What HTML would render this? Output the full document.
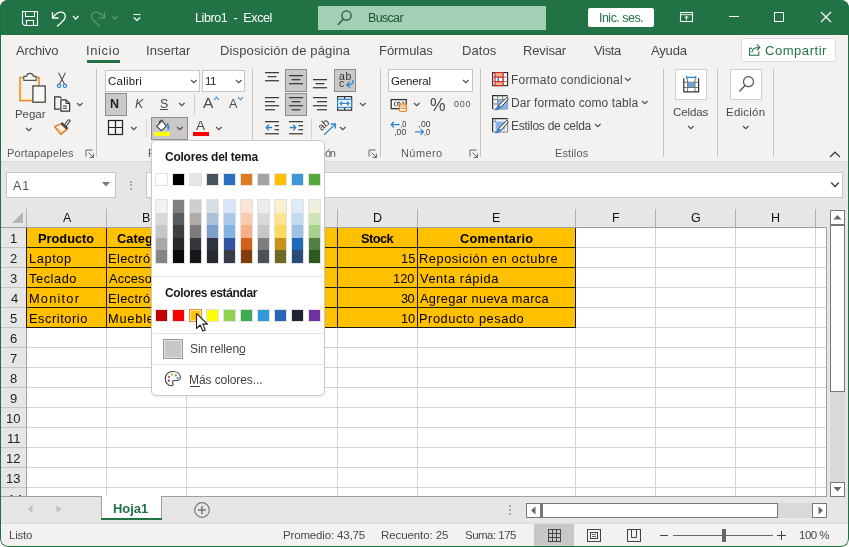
<!DOCTYPE html>
<html><head><meta charset="utf-8"><title>Excel</title>
<style>
html,body{margin:0;padding:0;background:#fff;}
body{width:849px;height:547px;overflow:hidden;position:relative;font-family:"Liberation Sans",sans-serif;}
#win{position:absolute;left:0;top:0;width:849px;height:547px;border-radius:8px;overflow:hidden;background:#e6e6e6;}
.b{position:absolute;box-sizing:border-box;display:block;}
.t{position:absolute;white-space:pre;will-change:transform;}
</style></head><body><div id="win">
<div class="b" style="left:0px;top:0px;width:849px;height:35px;background:#217346;"></div>
<div class="b" style="left:0px;top:35px;width:849px;height:126px;background:#f3f2f1;"></div>
<div class="b" style="left:0px;top:161px;width:849px;height:1px;background:#dcdcdc;"></div>
<div class="b" style="left:0px;top:162px;width:849px;height:362px;background:#e6e6e6;"></div>
<div class="b" style="left:0px;top:524px;width:849px;height:23px;background:#f3f2f1;"></div>
<div class="b" style="left:0px;top:523px;width:849px;height:1px;background:#dddddd;"></div>
<svg class="b" style="left:21px;top:10px;" width="18" height="17" viewBox="0 0 18 17"><path d="M1.5 1.5 H16.5 V15.5 H3.5 L1.5 13.5 Z M4.5 1.5 V6.5 H13.5 V1.5 M5.5 15.5 V10.5 H12.5 V15.5" fill="none" stroke="#fff" stroke-width="1.1"/></svg>
<svg class="b" style="left:50px;top:9px;" width="18" height="19" viewBox="0 0 18 19"><path d="M2.5 3 V9 H8.5 M2.8 8.7 C5 5.5 8 3 11.5 3.2 C14.5 3.5 16 6 15 9 C14 11.5 11 14 7 17.5" fill="none" stroke="#fff" stroke-width="1.3"/></svg>
<svg class="b" style="left:71.75px;top:15.0px;" width="7.5" height="5" viewBox="0 0 7.5 5"><path d="M1 1 L3.75 4 L6.5 1" fill="none" stroke="#fff" stroke-width="1.2"/></svg>
<svg class="b" style="left:89px;top:9px;" width="18" height="19" viewBox="0 0 18 19"><path d="M15.5 3 V9 H9.5 M15.2 8.7 C13 5.5 10 3 6.5 3.2 C3.5 3.5 2 6 3 9 C4 11.5 7 14 11 17.5" fill="none" stroke="#5f9a6f" stroke-width="1.2"/></svg>
<svg class="b" style="left:110.75px;top:15.0px;" width="7.5" height="5" viewBox="0 0 7.5 5"><path d="M1 1 L3.75 4 L6.5 1" fill="none" stroke="#5f9a6f" stroke-width="1.2"/></svg>
<svg class="b" style="left:132px;top:13px;" width="10" height="9" viewBox="0 0 10 9"><path d="M1.5 1.5 H8.5" stroke="#fff" stroke-width="1.2"/><path d="M1.8 4.5 L5 7.5 L8.2 4.5" fill="none" stroke="#fff" stroke-width="1.2"/></svg>
<div class="t" style="left:194.50px;top:11px;font-size:12.5px;line-height:14px;color:#fff;letter-spacing:-0.404px;">Libro1  -  Excel</div>
<div class="b" style="left:318px;top:6px;width:228px;height:24px;background:#a5cfb4;"></div>
<svg class="b" style="left:336px;top:9px;" width="18" height="18" viewBox="0 0 18 18"><circle cx="10.5" cy="6.5" r="4.6" fill="none" stroke="#1e5c39" stroke-width="1.3"/><path d="M7.3 10 L2 15.8" stroke="#1e5c39" stroke-width="1.3"/></svg>
<div class="t" style="left:367.60px;top:11px;font-size:12.5px;line-height:14px;color:#145a32;letter-spacing:-0.670px;">Buscar</div>
<div class="b" style="left:588px;top:8px;width:66px;height:19px;background:#fff;border-radius:2px;"></div>
<div class="t" style="left:598.67px;top:11px;font-size:12.5px;line-height:14px;color:#217346;letter-spacing:-0.525px;">Inic. ses.</div>
<svg class="b" style="left:679px;top:11px;" width="15" height="12" viewBox="0 0 15 12"><rect x="1.5" y="1.5" width="12" height="9" fill="none" stroke="#fff" stroke-width="1.1"/><path d="M1.5 3.7 H13.5" stroke="#fff" stroke-width="0.9"/><path d="M7.5 9.3 V5.4 M5.6 7 L7.5 5.1 L9.4 7" fill="none" stroke="#fff" stroke-width="1"/></svg>
<div class="b" style="left:729px;top:16px;width:10px;height:1px;background:#fff;"></div>
<div class="b" style="left:774px;top:12px;width:10px;height:10px;border:1px solid #fff;"></div>
<svg class="b" style="left:820px;top:11px;" width="12" height="12" viewBox="0 0 12 12"><path d="M1 1 L11 11 M11 1 L1 11" stroke="#fff" stroke-width="1.2"/></svg>
<div class="t" style="left:15.50px;top:43px;font-size:13px;line-height:15px;color:#484848;letter-spacing:-0.156px;">Archivo</div>
<div class="t" style="left:85.83px;top:43px;font-size:13px;line-height:15px;color:#484848;letter-spacing:0.607px;">Inicio</div>
<div class="t" style="left:145.83px;top:43px;font-size:13px;line-height:15px;color:#484848;letter-spacing:0.042px;">Insertar</div>
<div class="t" style="left:220.26px;top:43px;font-size:13px;line-height:15px;color:#484848;letter-spacing:0.143px;">Disposición de página</div>
<div class="t" style="left:378.96px;top:43px;font-size:13px;line-height:15px;color:#484848;letter-spacing:-0.045px;">Fórmulas</div>
<div class="t" style="left:461.56px;top:43px;font-size:13px;line-height:15px;color:#484848;letter-spacing:0.091px;">Datos</div>
<div class="t" style="left:523.26px;top:43px;font-size:13px;line-height:15px;color:#484848;letter-spacing:-0.156px;">Revisar</div>
<div class="t" style="left:594.20px;top:43px;font-size:13px;line-height:15px;color:#484848;letter-spacing:-0.333px;">Vista</div>
<div class="t" style="left:651.00px;top:43px;font-size:13px;line-height:15px;color:#484848;letter-spacing:-0.165px;">Ayuda</div>
<div class="b" style="left:87px;top:60px;width:33px;height:3px;background:#217346;"></div>
<div class="b" style="left:741px;top:38px;width:95px;height:24px;background:#fff;border:1px solid #dedcda;border-radius:3px;"></div>
<svg class="b" style="left:748px;top:42px;" width="14" height="15" viewBox="0 0 14 15"><path d="M4.2 6.2 H1.6 V13.2 H10.8 V9.6" fill="none" stroke="#217346" stroke-width="1.1"/><path d="M3.8 10.4 C4.2 7.2 7 5.4 11.4 5.5 M8.8 2.6 L11.8 5.5 L8.8 8.4" fill="none" stroke="#217346" stroke-width="1.1"/></svg>
<div class="t" style="left:765.15px;top:43px;font-size:13px;line-height:15px;color:#217346;letter-spacing:0.547px;">Compartir</div>
<div class="b" style="left:96px;top:69px;width:1px;height:88px;background:#c8c6c4;"></div>
<div class="b" style="left:252px;top:69px;width:1px;height:88px;background:#c8c6c4;"></div>
<div class="b" style="left:380px;top:69px;width:1px;height:88px;background:#c8c6c4;"></div>
<div class="b" style="left:480px;top:69px;width:1px;height:88px;background:#c8c6c4;"></div>
<div class="b" style="left:663px;top:69px;width:1px;height:88px;background:#c8c6c4;"></div>
<div class="b" style="left:717px;top:69px;width:1px;height:88px;background:#c8c6c4;"></div>
<div class="b" style="left:773px;top:69px;width:1px;height:88px;background:#c8c6c4;"></div>
<svg class="b" style="left:17px;top:71px;" width="32" height="34" viewBox="0 0 32 34"><rect x="3" y="6.6" width="19" height="23" fill="#f3f2f1" stroke="#e4882c" stroke-width="1.6"/>
<rect x="4.4" y="8" width="16.2" height="20.2" fill="none" stroke="#ffe69a" stroke-width="1.2"/>
<path d="M6.8 9.4 V5.4 H9.6 C10 1.4 16 1.4 16.4 5.4 H19.2 V9.4 Z" fill="#f8f8f8" stroke="#555" stroke-width="1.1"/>
<rect x="15.9" y="15" width="12.3" height="16.2" fill="#f8f8f8" stroke="#444" stroke-width="1.3"/></svg>
<div class="t" style="left:14.78px;top:108px;font-size:11.5px;line-height:12px;color:#4a4a4a;letter-spacing:-0.053px;">Pegar</div>
<svg class="b" style="left:25.2px;top:127.15px;" width="7.6" height="4.7" viewBox="0 0 7.6 4.7"><path d="M1 1 L3.8 3.7 L6.6 1" fill="none" stroke="#4a4a4a" stroke-width="1.1"/></svg>
<svg class="b" style="left:56px;top:71px;" width="12" height="18" viewBox="0 0 12 18"><path d="M2.6 1.8 L8.4 13 M9.4 1.8 L3.6 13" stroke="#555" stroke-width="1.1" fill="none"/>
<circle cx="3" cy="14.8" r="1.7" fill="none" stroke="#2f86d0" stroke-width="1.2"/><circle cx="9" cy="14.8" r="1.7" fill="none" stroke="#2f86d0" stroke-width="1.2"/></svg>
<svg class="b" style="left:53px;top:95px;" width="19" height="18" viewBox="0 0 19 18"><path d="M6.8 14.2 H1.7 V1.8 H7 L8.6 3.4" fill="none" stroke="#333" stroke-width="1.25"/>
<path d="M7.9 4.9 H13 L16.6 8.5 V16.2 H7.9 Z" fill="#f8f8f8" stroke="#333" stroke-width="1.25" stroke-linejoin="round"/><path d="M13 4.9 V8.5 H16.6" fill="none" stroke="#333" stroke-width="1"/><path d="M10 11 H14 M10 13.3 H14" stroke="#333" stroke-width="1"/></svg>
<svg class="b" style="left:75.7px;top:102.15px;" width="7.6" height="4.7" viewBox="0 0 7.6 4.7"><path d="M1 1 L3.8 3.7 L6.6 1" fill="none" stroke="#4a4a4a" stroke-width="1.1"/></svg>
<svg class="b" style="left:53px;top:119px;" width="19" height="17" viewBox="0 0 19 17"><path d="M15.8 1.9 L12.3 6.6" stroke="#444" stroke-width="3.3" stroke-linecap="round" fill="none"/><path d="M15.8 1.9 L12.6 6.2" stroke="#f3f2f1" stroke-width="1.2" stroke-linecap="round" fill="none"/>
<path d="M1.7 7.7 L8 4.8 L13.8 10.4 L7.8 15.4 Z" fill="#fff6ec" stroke="#e07a1f" stroke-width="1.4" stroke-linejoin="round"/>
<path d="M4.5 9.5 L9.5 12.8" stroke="#f0a860" stroke-width="1"/>
<path d="M8.4 3.9 L14.6 9.9" stroke="#444" stroke-width="2.2" fill="none"/></svg>
<div class="t" style="left:6.82px;top:147px;font-size:11px;line-height:12px;color:#5a5a5a;letter-spacing:0.156px;">Portapapeles</div>
<svg class="b" style="left:85px;top:149px;" width="10" height="10" viewBox="0 0 10 10"><path d="M1 7.6 V1 H7.6" fill="none" stroke="#666" stroke-width="1"/><path d="M3.6 3.6 L8.4 8.4 M8.4 4.6 V8.4 H4.6" fill="none" stroke="#666" stroke-width="1"/></svg>
<div class="b" style="left:105px;top:70px;width:95px;height:22px;background:#fff;border:1px solid #c8c6c4;"></div>
<div class="t" style="left:108.22px;top:75px;font-size:11.5px;line-height:12px;color:#222;letter-spacing:0.213px;">Calibri</div>
<svg class="b" style="left:189.7px;top:79.15px;" width="7.6" height="4.7" viewBox="0 0 7.6 4.7"><path d="M1 1 L3.8 3.7 L6.6 1" fill="none" stroke="#4a4a4a" stroke-width="1.1"/></svg>
<div class="b" style="left:202px;top:70px;width:43px;height:22px;background:#fff;border:1px solid #c8c6c4;"></div>
<div class="t" style="left:204.84px;top:75px;font-size:11.5px;line-height:12px;color:#222;letter-spacing:-0.522px;">11</div>
<svg class="b" style="left:235.2px;top:79.15px;" width="7.6" height="4.7" viewBox="0 0 7.6 4.7"><path d="M1 1 L3.8 3.7 L6.6 1" fill="none" stroke="#4a4a4a" stroke-width="1.1"/></svg>
<div class="b" style="left:105px;top:93px;width:22px;height:23px;background:#cbc9c7;border:1px solid #8f8d8b;"></div>
<div class="t" style="left:109.79px;top:97px;font-size:12.5px;line-height:14px;color:#222;font-weight:700;">N</div>
<div class="t" style="left:134.93px;top:97px;font-size:12.5px;line-height:14px;color:#4a4a4a;font-style:italic;">K</div>
<div class="t" style="left:160.44px;top:97px;font-size:12.5px;line-height:14px;color:#4a4a4a;">S</div>
<div class="b" style="left:160px;top:109px;width:8px;height:1px;background:#4a4a4a;"></div>
<svg class="b" style="left:177.7px;top:102.15px;" width="7.6" height="4.7" viewBox="0 0 7.6 4.7"><path d="M1 1 L3.8 3.7 L6.6 1" fill="none" stroke="#4a4a4a" stroke-width="1.1"/></svg>
<div class="b" style="left:194px;top:94px;width:1px;height:21px;background:#d2d0ce;"></div>
<div class="t" style="left:203.00px;top:94px;font-size:15.5px;line-height:17px;color:#4a4a4a;">A</div>
<svg class="b" style="left:212.5px;top:96px;" width="7" height="5" viewBox="0 0 7 5"><path d="M1 4 L3.5 1.2 L6 4" fill="none" stroke="#2f86d0" stroke-width="1.05"/></svg>
<div class="t" style="left:228.60px;top:97px;font-size:12.5px;line-height:14px;color:#4a4a4a;">A</div>
<svg class="b" style="left:236.5px;top:96px;" width="7" height="5" viewBox="0 0 7 5"><path d="M1 1 L3.5 3.8 L6 1" fill="none" stroke="#2f86d0" stroke-width="1.05"/></svg>
<svg class="b" style="left:107px;top:119px;" width="17" height="17" viewBox="0 0 17 17"><rect x="1.5" y="1.5" width="14" height="14" fill="none" stroke="#222" stroke-width="1.2"/><path d="M8.5 1.5 V15.5 M1.5 8.5 H15.5" stroke="#222" stroke-width="1.2"/></svg>
<svg class="b" style="left:129.7px;top:126.15px;" width="7.6" height="4.7" viewBox="0 0 7.6 4.7"><path d="M1 1 L3.8 3.7 L6.6 1" fill="none" stroke="#4a4a4a" stroke-width="1.1"/></svg>
<div class="b" style="left:146px;top:119px;width:1px;height:18px;background:#d8d6d4;"></div>
<div class="b" style="left:151px;top:117px;width:37px;height:23px;background:#cbc9c7;border:1px solid #8f8d8b;"></div>
<svg class="b" style="left:156px;top:119px;" width="15" height="13" viewBox="0 0 15 13"><path d="M0.7 7.4 L6.2 1.6 L10.3 7.2 L5.4 11.6 Z" fill="#fff" stroke="#3b3b3b" stroke-width="1.1" stroke-linejoin="round"/>
<path d="M6.4 1.2 C4.2 0.6 2.6 2.6 3.6 4.6" fill="none" stroke="#3b3b3b" stroke-width="1"/>
<path d="M10.9 4.4 C12.4 6 12.7 8.4 12.3 10.6" fill="none" stroke="#2f86d0" stroke-width="1.7"/></svg>
<div class="b" style="left:154px;top:132px;width:16px;height:4px;background:#ffff00;"></div>
<svg class="b" style="left:175.7px;top:126.15px;" width="7.6" height="4.7" viewBox="0 0 7.6 4.7"><path d="M1 1 L3.8 3.7 L6.6 1" fill="none" stroke="#4a4a4a" stroke-width="1.1"/></svg>
<div class="t" style="left:196.30px;top:118px;font-size:13.5px;line-height:15px;color:#4a4a4a;">A</div>
<div class="b" style="left:193px;top:132px;width:16px;height:4px;background:#ff0000;"></div>
<svg class="b" style="left:214.7px;top:126.15px;" width="7.6" height="4.7" viewBox="0 0 7.6 4.7"><path d="M1 1 L3.8 3.7 L6.6 1" fill="none" stroke="#4a4a4a" stroke-width="1.1"/></svg>
<svg class="b" style="left:265px;top:71.5px;" width="15" height="13.149999999999999" viewBox="0 0 15 13.149999999999999"><rect x="0" y="0.00" width="14" height="1.25" fill="#3b3b3b"/><rect x="2.6" y="4.05" width="8.8" height="1.25" fill="#3b3b3b"/><rect x="0" y="8.10" width="14" height="1.25" fill="#3b3b3b"/></svg>
<div class="b" style="left:285px;top:69px;width:22px;height:23px;background:#cbc9c7;border:1px solid #8f8d8b;"></div>
<svg class="b" style="left:289px;top:75px;" width="15" height="13.149999999999999" viewBox="0 0 15 13.149999999999999"><rect x="0" y="0.00" width="14" height="1.25" fill="#3b3b3b"/><rect x="2.6" y="4.05" width="8.8" height="1.25" fill="#3b3b3b"/><rect x="0" y="8.10" width="14" height="1.25" fill="#3b3b3b"/></svg>
<svg class="b" style="left:313px;top:79.2px;" width="15" height="13.149999999999999" viewBox="0 0 15 13.149999999999999"><rect x="0" y="0.00" width="14" height="1.25" fill="#3b3b3b"/><rect x="2.6" y="4.05" width="8.8" height="1.25" fill="#3b3b3b"/><rect x="0" y="8.10" width="14" height="1.25" fill="#3b3b3b"/></svg>
<div class="b" style="left:334px;top:69px;width:22px;height:23px;background:#cbc9c7;border:1px solid #8f8d8b;"></div>
<div class="t" style="left:338.98px;top:70px;font-size:10.5px;line-height:12px;color:#333;letter-spacing:0.785px;">ab</div>
<div class="t" style="left:339.18px;top:77px;font-size:10.5px;line-height:12px;color:#333;">c</div>
<svg class="b" style="left:345px;top:79px;" width="10" height="10" viewBox="0 0 10 10"><path d="M8 1 C8.6 4.5 7 6 2 5.8 M4.8 3 L1.6 5.8 L4.8 8.6" fill="none" stroke="#2f86d0" stroke-width="1.3"/></svg>
<svg class="b" style="left:265px;top:97.2px;" width="15" height="17.2" viewBox="0 0 15 17.2"><rect x="0" y="0.00" width="14" height="1.25" fill="#3b3b3b"/><rect x="0" y="4.05" width="10" height="1.25" fill="#3b3b3b"/><rect x="0" y="8.10" width="14" height="1.25" fill="#3b3b3b"/><rect x="0" y="12.15" width="10" height="1.25" fill="#3b3b3b"/></svg>
<div class="b" style="left:285px;top:93px;width:22px;height:23px;background:#cbc9c7;border:1px solid #8f8d8b;"></div>
<svg class="b" style="left:289px;top:97.2px;" width="15" height="17.2" viewBox="0 0 15 17.2"><rect x="0" y="0.00" width="14" height="1.25" fill="#3b3b3b"/><rect x="2.6" y="4.05" width="8.8" height="1.25" fill="#3b3b3b"/><rect x="0" y="8.10" width="14" height="1.25" fill="#3b3b3b"/><rect x="2.6" y="12.15" width="8.8" height="1.25" fill="#3b3b3b"/></svg>
<svg class="b" style="left:313px;top:97.2px;" width="15" height="17.2" viewBox="0 0 15 17.2"><rect x="0" y="0.00" width="14" height="1.25" fill="#3b3b3b"/><rect x="4" y="4.05" width="10" height="1.25" fill="#3b3b3b"/><rect x="0" y="8.10" width="14" height="1.25" fill="#3b3b3b"/><rect x="4" y="12.15" width="10" height="1.25" fill="#3b3b3b"/></svg>
<svg class="b" style="left:337px;top:96px;" width="16" height="15" viewBox="0 0 16 15"><rect x="0.6" y="0.6" width="14" height="13.6" fill="#fff" stroke="#333" stroke-width="1.2"/>
<path d="M7.6 0.6 V14.2" stroke="#333" stroke-width="1.2"/>
<rect x="0.7" y="3.3" width="13.8" height="8.2" fill="#fff" stroke="#2f86d0" stroke-width="1.3"/>
<path d="M3 7.4 H12.2 M5.2 5.2 L3 7.4 L5.2 9.6 M10 5.2 L12.2 7.4 L10 9.6" fill="none" stroke="#2f86d0" stroke-width="1.1"/></svg>
<svg class="b" style="left:358.9px;top:102.15px;" width="7.6" height="4.7" viewBox="0 0 7.6 4.7"><path d="M1 1 L3.8 3.7 L6.6 1" fill="none" stroke="#4a4a4a" stroke-width="1.1"/></svg>
<svg class="b" style="left:265px;top:121px;" width="15" height="17.2" viewBox="0 0 15 17.2"><rect x="0" y="0.00" width="14" height="1.25" fill="#3b3b3b"/><rect x="9.6" y="4.05" width="4.4" height="1.25" fill="#3b3b3b"/><rect x="9.6" y="8.10" width="4.4" height="1.25" fill="#3b3b3b"/><rect x="0" y="12.15" width="14" height="1.25" fill="#3b3b3b"/></svg>
<svg class="b" style="left:264.5px;top:123px;" width="9" height="9" viewBox="0 0 9 9"><path d="M7.2 4.5 H1.2 M3.8 1.8 L1.2 4.5 L3.8 7.2" fill="none" stroke="#2f86d0" stroke-width="1.3"/></svg>
<svg class="b" style="left:289px;top:121px;" width="15" height="17.2" viewBox="0 0 15 17.2"><rect x="0" y="0.00" width="14" height="1.25" fill="#3b3b3b"/><rect x="9.4" y="4.05" width="4.6" height="1.25" fill="#3b3b3b"/><rect x="9.4" y="8.10" width="4.6" height="1.25" fill="#3b3b3b"/><rect x="0" y="12.15" width="14" height="1.25" fill="#3b3b3b"/></svg>
<svg class="b" style="left:288.5px;top:123px;" width="9" height="9" viewBox="0 0 9 9"><path d="M0.8 4.5 H6.8 M4.2 1.8 L6.8 4.5 L4.2 7.2" fill="none" stroke="#2f86d0" stroke-width="1.3"/></svg>
<div class="b" style="left:311px;top:118px;width:1px;height:21px;background:#d2d0ce;"></div>
<svg class="b" style="left:317px;top:117px;" width="20" height="20" viewBox="0 0 20 20"><text x="0" y="0" font-family="Liberation Sans" font-size="10.5" fill="#3b3b3b" transform="translate(4.4 14.2) rotate(-42)">ab</text>
<path d="M7.2 17.7 L18 7.4 M13.6 7 H18.3 V11.6" fill="none" stroke="#2f86d0" stroke-width="1.3"/></svg>
<svg class="b" style="left:338.7px;top:125.95000000000002px;" width="7.6" height="4.7" viewBox="0 0 7.6 4.7"><path d="M1 1 L3.8 3.7 L6.6 1" fill="none" stroke="#4a4a4a" stroke-width="1.1"/></svg>
<div class="t" style="left:324.56px;top:147px;font-size:11px;line-height:12px;color:#5a5a5a;letter-spacing:-1.410px;">ón</div>
<svg class="b" style="left:368px;top:149px;" width="10" height="10" viewBox="0 0 10 10"><path d="M1 7.6 V1 H7.6" fill="none" stroke="#666" stroke-width="1"/><path d="M3.6 3.6 L8.4 8.4 M8.4 4.6 V8.4 H4.6" fill="none" stroke="#666" stroke-width="1"/></svg>
<div class="b" style="left:388px;top:69px;width:85px;height:23px;background:#fff;border:1px solid #c8c6c4;"></div>
<div class="t" style="left:391.12px;top:75px;font-size:11.5px;line-height:12px;color:#222;letter-spacing:-0.136px;">General</div>
<svg class="b" style="left:462.2px;top:79.15px;" width="7.6" height="4.7" viewBox="0 0 7.6 4.7"><path d="M1 1 L3.8 3.7 L6.6 1" fill="none" stroke="#4a4a4a" stroke-width="1.1"/></svg>
<svg class="b" style="left:390px;top:98px;" width="18" height="15" viewBox="0 0 18 15"><rect x="1.2" y="1.6" width="15" height="9" fill="#fff" stroke="#333" stroke-width="1.3"/>
<path d="M6.2 4 C3.6 3.6 3.6 8.4 6.2 8 M7.8 4 V8.2 M7.8 5.2 C8.4 3.6 10 3.8 10 5.2 V8.2 M12 4 C13 3.6 14 4.4 13.6 6" fill="none" stroke="#333" stroke-width="1"/>
<path d="M9.4 7 C9.4 5.4 16.4 5.4 16.4 7 V12.2 C16.4 13.8 9.4 13.8 9.4 12.2 Z" fill="#fff" stroke="#e8862d" stroke-width="1.2"/>
<path d="M9.4 7 C9.4 8.4 16.4 8.4 16.4 7 M9.4 9.3 C9.4 10.7 16.4 10.7 16.4 9.3" fill="none" stroke="#e8862d" stroke-width="1.1"/></svg>
<svg class="b" style="left:413.2px;top:102.15px;" width="7.6" height="4.7" viewBox="0 0 7.6 4.7"><path d="M1 1 L3.8 3.7 L6.6 1" fill="none" stroke="#4a4a4a" stroke-width="1.1"/></svg>
<div class="t" style="left:429.99px;top:95px;font-size:17.5px;line-height:20px;color:#4a4a4a;">%</div>
<div class="t" style="left:453.69px;top:99px;font-size:9px;line-height:10px;color:#555;letter-spacing:0.723px;">000</div>
<svg class="b" style="left:390px;top:119px;" width="18" height="17" viewBox="0 0 18 17"><path d="M1.2 5.7 H9.6 M4 2.8 L1.2 5.7 L4 8.6" fill="none" stroke="#2f86d0" stroke-width="1.3"/>
<text x="10.2" y="7.8" font-family="Liberation Sans" font-size="8.6" fill="#3b3b3b" lengthAdjust="spacingAndGlyphs" textLength="6.3">,0</text><text x="4.2" y="16.2" font-family="Liberation Sans" font-size="8.6" fill="#3b3b3b" lengthAdjust="spacingAndGlyphs" textLength="12">,00</text></svg>
<svg class="b" style="left:414px;top:119px;" width="18" height="17" viewBox="0 0 18 17"><text x="4.6" y="7.8" font-family="Liberation Sans" font-size="8.6" fill="#3b3b3b" lengthAdjust="spacingAndGlyphs" textLength="12">,00</text>
<path d="M1 12.8 H9.4 M6.6 9.9 L9.4 12.8 L6.6 15.7" fill="none" stroke="#2f86d0" stroke-width="1.3"/><text x="10" y="16.2" font-family="Liberation Sans" font-size="8.6" fill="#3b3b3b" lengthAdjust="spacingAndGlyphs" textLength="6.3">,0</text></svg>
<div class="t" style="left:400.62px;top:147px;font-size:11px;line-height:12px;color:#5a5a5a;letter-spacing:0.423px;">Número</div>
<svg class="b" style="left:468.5px;top:149px;" width="10" height="10" viewBox="0 0 10 10"><path d="M1 7.6 V1 H7.6" fill="none" stroke="#666" stroke-width="1"/><path d="M3.6 3.6 L8.4 8.4 M8.4 4.6 V8.4 H4.6" fill="none" stroke="#666" stroke-width="1"/></svg>
<svg class="b" style="left:491px;top:71px;" width="18" height="16" viewBox="0 0 18 16"><rect x="1.6" y="1.6" width="15" height="13" fill="#fff" stroke="#333" stroke-width="1.2"/>
<path d="M1.6 6 H16.6 M1.6 10.6 H16.6 M12 1.6 V14.6" stroke="#777" stroke-width="0.9"/>
<rect x="4" y="1.6" width="8" height="4.4" fill="#f6b48a" stroke="#d9281e" stroke-width="1.2"/>
<path d="M4 6 V10.6 M12 6 V10.6" stroke="#d9281e" stroke-width="1.2"/>
<rect x="6.4" y="6.6" width="1.6" height="3.6" fill="#3a7bd5"/>
<rect x="4" y="10.6" width="8" height="4" fill="#f6b48a" stroke="#d9281e" stroke-width="1.2"/></svg>
<svg class="b" style="left:491px;top:94px;" width="19" height="17" viewBox="0 0 19 17"><path d="M1.6 15 V1.6 H16.6" fill="none" stroke="#333" stroke-width="1.2"/>
<path d="M1.6 5.6 H16.6 M1.6 10 H16.6 M6.6 1.6 V15 M11.6 1.6 V15 M16.6 1.6 V15 M1.6 15 H16.6" stroke="#777" stroke-width="0.9" fill="none"/>
<rect x="6.8" y="5.8" width="9.8" height="9" fill="#8ab4e8"/><path d="M15.8 3.4 L17.4 5 L10 13.4 L7.6 11.6 Z" fill="#fff" stroke="#333" stroke-width="1"/><path d="M7.6 11.6 L10 13.4 C8.6 15.6 6 15.8 4 15.9 C5.6 14.6 5.8 12.6 7.6 11.6 Z" fill="#3a86d8" stroke="#2f78c8" stroke-width="0.6"/></svg>
<svg class="b" style="left:491px;top:117px;" width="19" height="17" viewBox="0 0 19 17"><path d="M1.6 15 V1.6 H16.6" fill="none" stroke="#333" stroke-width="1.2"/>
<path d="M16.6 1.6 V15 H1.6 M1.6 4.5 H4.5 M4.5 1.6 V4.5" stroke="#777" stroke-width="0.9" fill="none"/>
<rect x="4.5" y="4.5" width="9.5" height="8" fill="#8ab4e8"/><path d="M15.8 3.4 L17.4 5 L10 13.4 L7.6 11.6 Z" fill="#fff" stroke="#333" stroke-width="1"/><path d="M7.6 11.6 L10 13.4 C8.6 15.6 6 15.8 4 15.9 C5.6 14.6 5.8 12.6 7.6 11.6 Z" fill="#3a86d8" stroke="#2f78c8" stroke-width="0.6"/></svg>
<div class="t" style="left:510.64px;top:73px;font-size:12px;line-height:14px;color:#4a4a4a;letter-spacing:0.196px;">Formato condicional</div>
<svg class="b" style="left:623.7px;top:77.15px;" width="7.6" height="4.7" viewBox="0 0 7.6 4.7"><path d="M1 1 L3.8 3.7 L6.6 1" fill="none" stroke="#4a4a4a" stroke-width="1.1"/></svg>
<div class="t" style="left:510.64px;top:96px;font-size:12px;line-height:14px;color:#4a4a4a;letter-spacing:0.081px;">Dar formato como tabla</div>
<svg class="b" style="left:640.7px;top:100.15px;" width="7.6" height="4.7" viewBox="0 0 7.6 4.7"><path d="M1 1 L3.8 3.7 L6.6 1" fill="none" stroke="#4a4a4a" stroke-width="1.1"/></svg>
<div class="t" style="left:510.64px;top:119px;font-size:12px;line-height:14px;color:#4a4a4a;letter-spacing:-0.251px;">Estilos de celda</div>
<svg class="b" style="left:593.7px;top:123.15px;" width="7.6" height="4.7" viewBox="0 0 7.6 4.7"><path d="M1 1 L3.8 3.7 L6.6 1" fill="none" stroke="#4a4a4a" stroke-width="1.1"/></svg>
<div class="t" style="left:554.52px;top:147px;font-size:11px;line-height:12px;color:#5a5a5a;letter-spacing:0.128px;">Estilos</div>
<div class="b" style="left:675px;top:69px;width:32px;height:31px;background:#fff;border:1px solid #d2d0ce;"></div>
<svg class="b" style="left:682px;top:75px;" width="19" height="19" viewBox="0 0 19 19"><path d="M4.6 0.8 V4 M13.8 0.8 V4 M4.6 2.4 H13.8" stroke="#2f86d0" stroke-width="1.1" fill="none"/>
<rect x="5.8" y="7.6" width="7.2" height="4.8" fill="#6fa3e0"/>
<path d="M1.8 7.2 H16.6 M1.8 12.5 H16.6 M5.6 3.6 V16.8 M13 3.6 V16.8" stroke="#666" stroke-width="0.9" fill="none"/>
<path d="M1.8 3.2 V16.8 H16.6 V3.2" stroke="#333" stroke-width="1.2" fill="none"/></svg>
<div class="t" style="left:672.72px;top:106px;font-size:11.5px;line-height:12px;color:#4a4a4a;letter-spacing:-0.109px;">Celdas</div>
<svg class="b" style="left:686.7px;top:125.15px;" width="7.6" height="4.7" viewBox="0 0 7.6 4.7"><path d="M1 1 L3.8 3.7 L6.6 1" fill="none" stroke="#4a4a4a" stroke-width="1.1"/></svg>
<div class="b" style="left:730px;top:69px;width:32px;height:31px;background:#fff;border:1px solid #d2d0ce;"></div>
<svg class="b" style="left:738px;top:75px;" width="18" height="18" viewBox="0 0 18 18"><circle cx="10.5" cy="6.7" r="5" fill="none" stroke="#555" stroke-width="1.2"/><path d="M7 10.5 L1.5 16.5" stroke="#555" stroke-width="1.3"/></svg>
<div class="t" style="left:725.78px;top:106px;font-size:11.5px;line-height:12px;color:#4a4a4a;letter-spacing:0.232px;">Edición</div>
<svg class="b" style="left:741.7px;top:125.15px;" width="7.6" height="4.7" viewBox="0 0 7.6 4.7"><path d="M1 1 L3.8 3.7 L6.6 1" fill="none" stroke="#4a4a4a" stroke-width="1.1"/></svg>
<svg class="b" style="left:829px;top:151px;" width="12" height="7" viewBox="0 0 12 7"><path d="M1 6 L6 1.2 L11 6" fill="none" stroke="#444" stroke-width="1.3"/></svg>
<div class="b" style="left:6px;top:172px;width:110px;height:26px;background:#fff;border:1px solid #c6c6c6;"></div>
<div class="t" style="left:12.70px;top:179px;font-size:12.5px;line-height:14px;color:#555;letter-spacing:0.913px;">A1</div>
<svg class="b" style="left:101px;top:181px;" width="10" height="7" viewBox="0 0 10 7"><path d="M1 1 H9 L5 5.5 Z" fill="#777"/></svg>
<div class="b" style="left:130px;top:180.5px;width:2px;height:2px;background:#aaa;"></div>
<div class="b" style="left:130px;top:184px;width:2px;height:2px;background:#aaa;"></div>
<div class="b" style="left:130px;top:187.5px;width:2px;height:2px;background:#aaa;"></div>
<div class="b" style="left:146px;top:172px;width:697px;height:26px;background:#fff;border:1px solid #c6c6c6;"></div>
<svg class="b" style="left:830px;top:181px;" width="10" height="8" viewBox="0 0 10 8"><path d="M1.2 1.5 L5 5.5 L8.8 1.5" fill="none" stroke="#555" stroke-width="1.8"/></svg>
<div class="b" style="left:27px;top:228px;width:799px;height:268px;background:#fff;"></div>
<div class="b" style="left:1px;top:207px;width:826px;height:21px;background:#e6e6e6;"></div>
<div class="b" style="left:1px;top:228px;width:26px;height:268px;background:#e6e6e6;"></div>
<svg class="b" style="left:11px;top:211px;" width="13" height="13" viewBox="0 0 13 13"><path d="M12 1 V12 H1 Z" fill="#b5b5b5"/></svg>
<div class="b" style="left:26px;top:209px;width:1px;height:19px;background:#b0b0b0;"></div>
<div class="b" style="left:106px;top:209px;width:1px;height:19px;background:#b0b0b0;"></div>
<div class="b" style="left:186px;top:209px;width:1px;height:19px;background:#b0b0b0;"></div>
<div class="b" style="left:337px;top:209px;width:1px;height:19px;background:#b0b0b0;"></div>
<div class="b" style="left:417px;top:209px;width:1px;height:19px;background:#b0b0b0;"></div>
<div class="b" style="left:575px;top:209px;width:1px;height:19px;background:#b0b0b0;"></div>
<div class="b" style="left:655px;top:209px;width:1px;height:19px;background:#b0b0b0;"></div>
<div class="b" style="left:735px;top:209px;width:1px;height:19px;background:#b0b0b0;"></div>
<div class="b" style="left:815px;top:209px;width:1px;height:19px;background:#b0b0b0;"></div>
<div class="b" style="left:1px;top:227px;width:826px;height:1px;background:#9f9f9f;"></div>
<div class="b" style="left:26px;top:228px;width:1px;height:268px;background:#9f9f9f;"></div>
<div class="t" style="left:63.23px;top:211px;font-size:12.5px;line-height:14px;color:#111;">A</div>
<div class="t" style="left:142.23px;top:211px;font-size:12.5px;line-height:14px;color:#111;">B</div>
<div class="t" style="left:257.76px;top:211px;font-size:12.5px;line-height:14px;color:#111;">C</div>
<div class="t" style="left:372.89px;top:211px;font-size:12.5px;line-height:14px;color:#111;">D</div>
<div class="t" style="left:492.23px;top:211px;font-size:12.5px;line-height:14px;color:#111;">E</div>
<div class="t" style="left:611.58px;top:211px;font-size:12.5px;line-height:14px;color:#111;">F</div>
<div class="t" style="left:690.91px;top:211px;font-size:12.5px;line-height:14px;color:#111;">G</div>
<div class="t" style="left:770.89px;top:211px;font-size:12.5px;line-height:14px;color:#111;">H</div>
<div class="b" style="left:106px;top:228px;width:1px;height:268px;background:#d4d4d4;"></div>
<div class="b" style="left:186px;top:228px;width:1px;height:268px;background:#d4d4d4;"></div>
<div class="b" style="left:337px;top:228px;width:1px;height:268px;background:#d4d4d4;"></div>
<div class="b" style="left:417px;top:228px;width:1px;height:268px;background:#d4d4d4;"></div>
<div class="b" style="left:575px;top:228px;width:1px;height:268px;background:#d4d4d4;"></div>
<div class="b" style="left:655px;top:228px;width:1px;height:268px;background:#d4d4d4;"></div>
<div class="b" style="left:735px;top:228px;width:1px;height:268px;background:#d4d4d4;"></div>
<div class="b" style="left:815px;top:228px;width:1px;height:268px;background:#d4d4d4;"></div>
<div class="b" style="left:1px;top:247px;width:25px;height:1px;background:#c4c4c4;"></div>
<div class="b" style="left:27px;top:247px;width:799px;height:1px;background:#d4d4d4;"></div>
<div class="b" style="left:1px;top:267px;width:25px;height:1px;background:#c4c4c4;"></div>
<div class="b" style="left:27px;top:267px;width:799px;height:1px;background:#d4d4d4;"></div>
<div class="b" style="left:1px;top:287px;width:25px;height:1px;background:#c4c4c4;"></div>
<div class="b" style="left:27px;top:287px;width:799px;height:1px;background:#d4d4d4;"></div>
<div class="b" style="left:1px;top:307px;width:25px;height:1px;background:#c4c4c4;"></div>
<div class="b" style="left:27px;top:307px;width:799px;height:1px;background:#d4d4d4;"></div>
<div class="b" style="left:1px;top:327px;width:25px;height:1px;background:#c4c4c4;"></div>
<div class="b" style="left:27px;top:327px;width:799px;height:1px;background:#d4d4d4;"></div>
<div class="b" style="left:1px;top:347px;width:25px;height:1px;background:#c4c4c4;"></div>
<div class="b" style="left:27px;top:347px;width:799px;height:1px;background:#d4d4d4;"></div>
<div class="b" style="left:1px;top:367px;width:25px;height:1px;background:#c4c4c4;"></div>
<div class="b" style="left:27px;top:367px;width:799px;height:1px;background:#d4d4d4;"></div>
<div class="b" style="left:1px;top:387px;width:25px;height:1px;background:#c4c4c4;"></div>
<div class="b" style="left:27px;top:387px;width:799px;height:1px;background:#d4d4d4;"></div>
<div class="b" style="left:1px;top:407px;width:25px;height:1px;background:#c4c4c4;"></div>
<div class="b" style="left:27px;top:407px;width:799px;height:1px;background:#d4d4d4;"></div>
<div class="b" style="left:1px;top:427px;width:25px;height:1px;background:#c4c4c4;"></div>
<div class="b" style="left:27px;top:427px;width:799px;height:1px;background:#d4d4d4;"></div>
<div class="b" style="left:1px;top:447px;width:25px;height:1px;background:#c4c4c4;"></div>
<div class="b" style="left:27px;top:447px;width:799px;height:1px;background:#d4d4d4;"></div>
<div class="b" style="left:1px;top:467px;width:25px;height:1px;background:#c4c4c4;"></div>
<div class="b" style="left:27px;top:467px;width:799px;height:1px;background:#d4d4d4;"></div>
<div class="b" style="left:1px;top:487px;width:25px;height:1px;background:#c4c4c4;"></div>
<div class="b" style="left:27px;top:487px;width:799px;height:1px;background:#d4d4d4;"></div>
<div class="t" style="left:9.91px;top:231px;font-size:13px;line-height:15px;color:#222;">1</div>
<div class="t" style="left:10.23px;top:251px;font-size:13px;line-height:15px;color:#222;">2</div>
<div class="t" style="left:10.43px;top:271px;font-size:13px;line-height:15px;color:#222;">3</div>
<div class="t" style="left:10.62px;top:291px;font-size:13px;line-height:15px;color:#222;">4</div>
<div class="t" style="left:10.36px;top:311px;font-size:13px;line-height:15px;color:#222;">5</div>
<div class="t" style="left:10.23px;top:331px;font-size:13px;line-height:15px;color:#222;">6</div>
<div class="t" style="left:10.23px;top:351px;font-size:13px;line-height:15px;color:#222;">7</div>
<div class="t" style="left:10.36px;top:371px;font-size:13px;line-height:15px;color:#222;">8</div>
<div class="t" style="left:10.30px;top:391px;font-size:13px;line-height:15px;color:#222;">9</div>
<div class="t" style="left:6.29px;top:411px;font-size:13px;line-height:15px;color:#222;">10</div>
<div class="t" style="left:6.78px;top:431px;font-size:13px;line-height:15px;color:#222;">11</div>
<div class="t" style="left:6.29px;top:451px;font-size:13px;line-height:15px;color:#222;">12</div>
<div class="t" style="left:6.29px;top:471px;font-size:13px;line-height:15px;color:#222;">13</div>
<div class="b" style="left:1px;top:488px;width:25px;height:8px;background:#e6e6e6;overflow:hidden;"><div class="t" style="left:6.5px;top:3.6px;font-size:13px;line-height:16px;color:#222">14</div></div>
<div class="b" style="left:27px;top:228px;width:549px;height:100px;background:#ffc000;"></div>
<div class="b" style="left:26px;top:228px;width:1px;height:100px;background:#1a1a1a;"></div>
<div class="b" style="left:106px;top:228px;width:1px;height:100px;background:#1a1a1a;"></div>
<div class="b" style="left:186px;top:228px;width:1px;height:100px;background:#1a1a1a;"></div>
<div class="b" style="left:337px;top:228px;width:1px;height:100px;background:#1a1a1a;"></div>
<div class="b" style="left:417px;top:228px;width:1px;height:100px;background:#1a1a1a;"></div>
<div class="b" style="left:575px;top:228px;width:1px;height:100px;background:#1a1a1a;"></div>
<div class="b" style="left:26px;top:247px;width:550px;height:1px;background:#1a1a1a;"></div>
<div class="b" style="left:26px;top:267px;width:550px;height:1px;background:#1a1a1a;"></div>
<div class="b" style="left:26px;top:287px;width:550px;height:1px;background:#1a1a1a;"></div>
<div class="b" style="left:26px;top:307px;width:550px;height:1px;background:#1a1a1a;"></div>
<div class="b" style="left:26px;top:327px;width:550px;height:1px;background:#1a1a1a;"></div>
<div class="t" style="left:37.77px;top:231px;font-size:12.8px;line-height:15px;color:#000;font-weight:700;">Producto</div>
<div class="t" style="left:117.09px;top:231px;font-size:12.8px;line-height:15px;color:#000;font-weight:700;letter-spacing:0.035px;">Categoría</div>
<div class="t" style="left:361.38px;top:231px;font-size:12.8px;line-height:15px;color:#000;font-weight:700;letter-spacing:-0.565px;">Stock</div>
<div class="t" style="left:459.99px;top:231px;font-size:12.8px;line-height:15px;color:#000;font-weight:700;letter-spacing:0.206px;">Comentario</div>
<div class="t" style="left:28.68px;top:251px;font-size:12.8px;line-height:15px;color:#000;letter-spacing:0.614px;">Laptop</div>
<div class="t" style="left:29.44px;top:271px;font-size:12.8px;line-height:15px;color:#000;letter-spacing:0.562px;">Teclado</div>
<div class="t" style="left:28.68px;top:291px;font-size:12.8px;line-height:15px;color:#000;letter-spacing:1.205px;">Monitor</div>
<div class="t" style="left:28.68px;top:311px;font-size:12.8px;line-height:15px;color:#000;letter-spacing:0.547px;">Escritorio</div>
<div class="t" style="left:108.08px;top:251px;font-size:12.8px;line-height:15px;color:#000;letter-spacing:0.376px;">Electrónica</div>
<div class="t" style="left:109.10px;top:271px;font-size:12.8px;line-height:15px;color:#000;letter-spacing:0.162px;">Accesorios</div>
<div class="t" style="left:108.08px;top:291px;font-size:12.8px;line-height:15px;color:#000;letter-spacing:0.376px;">Electrónica</div>
<div class="t" style="left:108.08px;top:311px;font-size:12.8px;line-height:15px;color:#000;letter-spacing:0.798px;">Muebles</div>
<div class="t" style="left:400.64px;top:251px;font-size:12.8px;line-height:15px;color:#000;letter-spacing:0.064px;">15</div>
<div class="t" style="left:393.44px;top:271px;font-size:12.8px;line-height:15px;color:#000;letter-spacing:0.048px;">120</div>
<div class="t" style="left:401.15px;top:291px;font-size:12.8px;line-height:15px;color:#000;letter-spacing:-0.512px;">30</div>
<div class="t" style="left:400.64px;top:311px;font-size:12.8px;line-height:15px;color:#000;">10</div>
<div class="t" style="left:419.18px;top:251px;font-size:12.8px;line-height:15px;color:#000;letter-spacing:0.564px;">Reposición en octubre</div>
<div class="t" style="left:420.20px;top:271px;font-size:12.8px;line-height:15px;color:#000;letter-spacing:0.588px;">Venta rápida</div>
<div class="t" style="left:420.20px;top:291px;font-size:12.8px;line-height:15px;color:#000;letter-spacing:0.309px;">Agregar nueva marca</div>
<div class="t" style="left:419.18px;top:311px;font-size:12.8px;line-height:15px;color:#000;letter-spacing:0.569px;">Producto pesado</div>
<div class="b" style="left:826px;top:227px;width:1px;height:270px;background:#9f9f9f;"></div>
<div class="b" style="left:1px;top:496px;width:826px;height:1px;background:#9f9f9f;"></div>
<div class="b" style="left:830px;top:225px;width:15px;height:257px;background:#d9d9d9;"></div>
<div class="b" style="left:830px;top:210px;width:15px;height:15px;background:#fff;border:1px solid #777;"></div>
<svg class="b" style="left:833px;top:214px;" width="9" height="7" viewBox="0 0 9 7"><path d="M0.5 5.5 L4.5 1 L8.5 5.5 Z" fill="#666"/></svg>
<div class="b" style="left:830px;top:225px;width:15px;height:167px;background:#fff;border:1px solid #777;"></div>
<div class="b" style="left:830px;top:482px;width:15px;height:15px;background:#fff;border:1px solid #777;"></div>
<svg class="b" style="left:833px;top:486px;" width="9" height="7" viewBox="0 0 9 7"><path d="M0.5 1 L4.5 5.5 L8.5 1 Z" fill="#666"/></svg>
<svg class="b" style="left:26px;top:504px;" width="8" height="10" viewBox="0 0 8 10"><path d="M6.5 1 V9 L1.5 5 Z" fill="#c2c2c2"/></svg>
<svg class="b" style="left:55px;top:504px;" width="8" height="10" viewBox="0 0 8 10"><path d="M1.5 1 V9 L6.5 5 Z" fill="#c2c2c2"/></svg>
<div class="b" style="left:101px;top:496px;width:61px;height:24px;background:#fff;border:1px solid #9f9f9f;border-top:none;border-bottom:none;"></div>
<div class="b" style="left:101px;top:518px;width:61px;height:2px;background:#217346;"></div>
<div class="t" style="left:112.75px;top:501px;font-size:13px;line-height:15px;color:#217346;font-weight:700;letter-spacing:-0.072px;">Hoja1</div>
<svg class="b" style="left:193px;top:501px;" width="18" height="18" viewBox="0 0 18 18"><circle cx="9" cy="9" r="7.3" fill="none" stroke="#777" stroke-width="1.2"/><path d="M9 5 V13 M5 9 H13" stroke="#777" stroke-width="1.5"/></svg>
<div class="b" style="left:509px;top:505px;width:2px;height:2px;background:#aaa;"></div>
<div class="b" style="left:509px;top:509px;width:2px;height:2px;background:#aaa;"></div>
<div class="b" style="left:509px;top:513px;width:2px;height:2px;background:#aaa;"></div>
<div class="b" style="left:541px;top:503px;width:272px;height:15px;background:#d9d9d9;"></div>
<div class="b" style="left:526px;top:503px;width:15px;height:15px;background:#fff;border:1px solid #777;"></div>
<svg class="b" style="left:530px;top:506px;" width="7" height="9" viewBox="0 0 7 9"><path d="M5.5 0.5 L1 4.5 L5.5 8.5 Z" fill="#666"/></svg>
<div class="b" style="left:541px;top:503px;width:237px;height:15px;background:#fff;border:1px solid #777;border-left-width:2px;"></div>
<div class="b" style="left:812px;top:503px;width:15px;height:15px;background:#fff;border:1px solid #777;"></div>
<svg class="b" style="left:817px;top:506px;" width="7" height="9" viewBox="0 0 7 9"><path d="M1.5 0.5 L6 4.5 L1.5 8.5 Z" fill="#666"/></svg>
<div class="t" style="left:9.38px;top:529px;font-size:11.5px;line-height:12px;color:#4a4a4a;letter-spacing:-0.221px;">Listo</div>
<div class="t" style="left:282.88px;top:529px;font-size:11.5px;line-height:12px;color:#4a4a4a;letter-spacing:-0.162px;">Promedio: 43,75</div>
<div class="t" style="left:380.88px;top:529px;font-size:11.5px;line-height:12px;color:#4a4a4a;letter-spacing:-0.095px;">Recuento: 25</div>
<div class="t" style="left:464.98px;top:529px;font-size:11.5px;line-height:12px;color:#4a4a4a;letter-spacing:-0.516px;">Suma: 175</div>
<div class="b" style="left:534px;top:524px;width:40px;height:23px;background:#c8c8c8;"></div>
<svg class="b" style="left:548px;top:529px;" width="13" height="13" viewBox="0 0 13 13"><rect x="0.5" y="0.5" width="12" height="12" fill="none" stroke="#444" stroke-width="1"/><path d="M4.5 0.5 V12.5 M8.5 0.5 V12.5 M0.5 4.5 H12.5 M0.5 8.5 H12.5" stroke="#444" stroke-width="1"/></svg>
<svg class="b" style="left:587px;top:529px;" width="14" height="13" viewBox="0 0 14 13"><rect x="0.5" y="0.5" width="13" height="12" fill="none" stroke="#444" stroke-width="1"/><rect x="3.5" y="3.5" width="7" height="6" fill="none" stroke="#444" stroke-width="1"/><path d="M5 5.5 H9 M5 7.5 H9" stroke="#444" stroke-width="0.8"/></svg>
<svg class="b" style="left:627px;top:529px;" width="14" height="13" viewBox="0 0 14 13"><rect x="0.5" y="0.5" width="13" height="12" fill="none" stroke="#444" stroke-width="1"/><path d="M4.5 0.5 V8.5 M9.5 0.5 V8.5 M4.5 8.5 H9.5" fill="none" stroke="#444" stroke-width="1"/></svg>
<div class="b" style="left:660px;top:535px;width:8px;height:1px;background:#444;"></div>
<div class="b" style="left:673px;top:535px;width:100px;height:1px;background:#666;"></div>
<div class="b" style="left:722px;top:529px;width:4px;height:13px;background:#666;"></div>
<div class="b" style="left:777px;top:535px;width:9px;height:1px;background:#444;"></div>
<div class="b" style="left:781px;top:531px;width:1px;height:9px;background:#444;"></div>
<div class="t" style="left:798.84px;top:529px;font-size:11.5px;line-height:12px;color:#4a4a4a;letter-spacing:-0.509px;">100 %</div>
<div class="t" style="left:147.92px;top:147px;font-size:11px;line-height:12px;color:#5a5a5a;">Fuente</div>
<div class="b" style="left:151px;top:140px;width:174px;height:256px;background:#fff;border:1px solid #c9c9c9;border-radius:5px;box-shadow:0 1px 2px rgba(0,0,0,0.08);"></div>
<div class="t" style="left:165.32px;top:150px;font-size:12px;line-height:14px;color:#1a1a1a;font-weight:700;letter-spacing:-0.240px;">Colores del tema</div>
<div class="b" style="left:155px;top:173px;width:13px;height:13px;background:#ffffff;border:1px solid #e2e2e2;"></div>
<div class="b" style="left:172px;top:173px;width:13px;height:13px;background:#000000;border:1px solid #e2e2e2;"></div>
<div class="b" style="left:189px;top:173px;width:13px;height:13px;background:#e7e6e6;border:1px solid #e2e2e2;"></div>
<div class="b" style="left:206px;top:173px;width:13px;height:13px;background:#48525f;border:1px solid #e2e2e2;"></div>
<div class="b" style="left:223px;top:173px;width:13px;height:13px;background:#2a6ebf;border:1px solid #e2e2e2;"></div>
<div class="b" style="left:240px;top:173px;width:13px;height:13px;background:#e07c20;border:1px solid #e2e2e2;"></div>
<div class="b" style="left:257px;top:173px;width:13px;height:13px;background:#a3a3a3;border:1px solid #e2e2e2;"></div>
<div class="b" style="left:274px;top:173px;width:13px;height:13px;background:#ffc000;border:1px solid #e2e2e2;"></div>
<div class="b" style="left:291px;top:173px;width:13px;height:13px;background:#3d97d8;border:1px solid #e2e2e2;"></div>
<div class="b" style="left:308px;top:173px;width:13px;height:13px;background:#55a83c;border:1px solid #e2e2e2;"></div>
<div class="b" style="left:155px;top:199px;width:13px;height:65px;border:1px solid #e2e2e2;overflow:hidden;"><div style="height:12.6px;background:#f2f2f2"></div><div style="height:12.6px;background:#d8d8d8"></div><div style="height:12.6px;background:#c4c6c8"></div><div style="height:12.6px;background:#a9a9a9"></div><div style="height:12.6px;background:#858585"></div></div>
<div class="b" style="left:172px;top:199px;width:13px;height:65px;border:1px solid #e2e2e2;overflow:hidden;"><div style="height:12.6px;background:#7f7f7f"></div><div style="height:12.6px;background:#585d62"></div><div style="height:12.6px;background:#3f3f3f"></div><div style="height:12.6px;background:#26282c"></div><div style="height:12.6px;background:#0c0c0c"></div></div>
<div class="b" style="left:189px;top:199px;width:13px;height:65px;border:1px solid #e2e2e2;overflow:hidden;"><div style="height:12.6px;background:#d0cece"></div><div style="height:12.6px;background:#aeabab"></div><div style="height:12.6px;background:#7c7c7c"></div><div style="height:12.6px;background:#34373b"></div><div style="height:12.6px;background:#15171a"></div></div>
<div class="b" style="left:206px;top:199px;width:13px;height:65px;border:1px solid #e2e2e2;overflow:hidden;"><div style="height:12.6px;background:#d8dee6"></div><div style="height:12.6px;background:#abc0da"></div><div style="height:12.6px;background:#7ba1cc"></div><div style="height:12.6px;background:#2d3440"></div><div style="height:12.6px;background:#272b30"></div></div>
<div class="b" style="left:223px;top:199px;width:13px;height:65px;border:1px solid #e2e2e2;overflow:hidden;"><div style="height:12.6px;background:#d9e4f4"></div><div style="height:12.6px;background:#a9c8ea"></div><div style="height:12.6px;background:#84b2e2"></div><div style="height:12.6px;background:#3353a6"></div><div style="height:12.6px;background:#363c48"></div></div>
<div class="b" style="left:240px;top:199px;width:13px;height:65px;border:1px solid #e2e2e2;overflow:hidden;"><div style="height:12.6px;background:#fbe5d5"></div><div style="height:12.6px;background:#f7cbac"></div><div style="height:12.6px;background:#f5ae88"></div><div style="height:12.6px;background:#d0601a"></div><div style="height:12.6px;background:#833c0b"></div></div>
<div class="b" style="left:257px;top:199px;width:13px;height:65px;border:1px solid #e2e2e2;overflow:hidden;"><div style="height:12.6px;background:#ededed"></div><div style="height:12.6px;background:#d9dadc"></div><div style="height:12.6px;background:#c6c6c6"></div><div style="height:12.6px;background:#7d7d7d"></div><div style="height:12.6px;background:#4c5258"></div></div>
<div class="b" style="left:274px;top:199px;width:13px;height:65px;border:1px solid #e2e2e2;overflow:hidden;"><div style="height:12.6px;background:#f9f0d0"></div><div style="height:12.6px;background:#ffe390"></div><div style="height:12.6px;background:#ffd95e"></div><div style="height:12.6px;background:#c8921a"></div><div style="height:12.6px;background:#6f6a22"></div></div>
<div class="b" style="left:291px;top:199px;width:13px;height:65px;border:1px solid #e2e2e2;overflow:hidden;"><div style="height:12.6px;background:#deebf6"></div><div style="height:12.6px;background:#c4daf0"></div><div style="height:12.6px;background:#9cc3e5"></div><div style="height:12.6px;background:#2068b8"></div><div style="height:12.6px;background:#2a4a78"></div></div>
<div class="b" style="left:308px;top:199px;width:13px;height:65px;border:1px solid #e2e2e2;overflow:hidden;"><div style="height:12.6px;background:#f0eedc"></div><div style="height:12.6px;background:#cfe3b8"></div><div style="height:12.6px;background:#a8d08d"></div><div style="height:12.6px;background:#4f8040"></div><div style="height:12.6px;background:#2f5a1e"></div></div>
<div class="b" style="left:153px;top:276px;width:170px;height:1px;background:#e3e3e3;"></div>
<div class="t" style="left:165.32px;top:286px;font-size:12px;line-height:14px;color:#1a1a1a;font-weight:700;letter-spacing:-0.379px;">Colores estándar</div>
<div class="b" style="left:155px;top:309px;width:13px;height:13px;background:#c00000;border:1px solid #e2e2e2;"></div>
<div class="b" style="left:172px;top:309px;width:13px;height:13px;background:#ff0000;border:1px solid #e2e2e2;"></div>
<div class="b" style="left:189px;top:309px;width:13px;height:13px;background:#ffc000;border:1px solid #e3912a;box-shadow:inset 0 0 0 1px #ffe9a8;"></div>
<div class="b" style="left:206px;top:309px;width:13px;height:13px;background:#ffff00;border:1px solid #e2e2e2;"></div>
<div class="b" style="left:223px;top:309px;width:13px;height:13px;background:#92d050;border:1px solid #e2e2e2;"></div>
<div class="b" style="left:240px;top:309px;width:13px;height:13px;background:#3fad4f;border:1px solid #e2e2e2;"></div>
<div class="b" style="left:257px;top:309px;width:13px;height:13px;background:#2f9ad9;border:1px solid #e2e2e2;"></div>
<div class="b" style="left:274px;top:309px;width:13px;height:13px;background:#2767b3;border:1px solid #e2e2e2;"></div>
<div class="b" style="left:291px;top:309px;width:13px;height:13px;background:#1e2233;border:1px solid #e2e2e2;"></div>
<div class="b" style="left:308px;top:309px;width:13px;height:13px;background:#7030a0;border:1px solid #e2e2e2;"></div>
<div class="b" style="left:153px;top:333px;width:170px;height:1px;background:#e3e3e3;"></div>
<div class="b" style="left:163px;top:339px;width:20px;height:20px;background:#c8c8c8;border:1px solid #9a9a9a;box-shadow:inset 0 0 0 1px #e0e0e0;"></div>
<div class="t" style="left:189.86px;top:342px;font-size:12px;line-height:14px;color:#444;letter-spacing:-0.108px;">Sin relleno</div>
<div class="b" style="left:238.5px;top:354px;width:6.5px;height:1px;background:#444;"></div>
<div class="b" style="left:153px;top:364px;width:170px;height:1px;background:#e3e3e3;"></div>
<svg class="b" style="left:164px;top:370px;" width="18" height="18" viewBox="0 0 18 18"><path d="M9 1.5 C4 1.5 1.2 5 1.2 8.8 C1.2 12.5 4 15.8 7.5 15.8 C9.5 15.8 9.2 14 8.6 12.8 C8 11.5 9 10.5 10.5 10.5 H13 C15.5 10.5 16.6 9 16.4 7 C16 3.8 13 1.5 9 1.5 Z" fill="#fff" stroke="#444" stroke-width="1.1"/>
<circle cx="5" cy="7" r="1.1" fill="#d13438"/><circle cx="8" cy="4.6" r="1.1" fill="#e8862d"/><circle cx="11.8" cy="5.3" r="1.1" fill="#3fad4f"/><circle cx="4.8" cy="10.7" r="1.1" fill="#7030a0"/><circle cx="13.6" cy="8" r="1.1" fill="#2f86d0"/></svg>
<div class="t" style="left:189.44px;top:373px;font-size:12px;line-height:14px;color:#444;letter-spacing:-0.082px;">Más colores...</div>
<div class="b" style="left:190.4px;top:386px;width:10px;height:1px;background:#444;"></div>
<svg class="b" style="left:194.7px;top:311.7px;" width="14" height="21" viewBox="0 0 14 21"><path d="M1.5 1.5 V16.5 L5.2 13 L7.8 19 L10.3 17.9 L7.7 12.1 H12.5 Z" fill="#fff" stroke="#222" stroke-width="1.1" stroke-linejoin="round"/></svg>
<div class="b" style="left:0px;top:0px;width:849px;height:547px;border:1px solid #1a7141;border-radius:8px;pointer-events:none;border-top-color:#217346;"></div>
</div></body></html>
